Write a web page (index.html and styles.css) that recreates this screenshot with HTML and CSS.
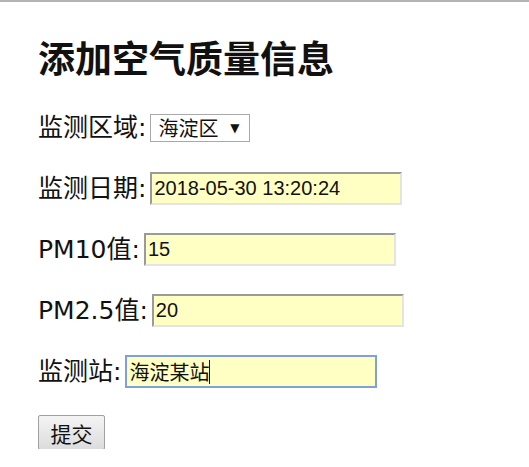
FILE: index.html
```html
<!DOCTYPE html>
<html lang="zh-CN">

<head>
    <meta charset="UTF-8">
    <title>添加空气质量信息</title>
    <link rel="stylesheet" href="styles.css">
</head>

<body>
    <div class="page">
        <h1>添加空气质量信息</h1>
        <form class="air-form">
            <div class="row">
                <label>监测区域:</label>
                <div class="select">海淀区<span class="arrow">▼</span></div>
            </div>
            <div class="row">
                <label>监测日期:</label>
                <input class="field" type="text" value="2018-05-30 13:20:24">
            </div>
            <div class="row">
                <label>PM10值:</label>
                <input class="field" type="text" value="15">
            </div>
            <div class="row">
                <label>PM2.5值:</label>
                <input class="field" type="text" value="20">
            </div>
            <div class="row">
                <label>监测站:</label>
                <div class="field focused">海淀某站<span class="caret"></span></div>
            </div>
            <div class="row">
                <button class="btn" type="button">提交</button>
            </div>
        </form>
    </div>
</body>

</html>
```

FILE: styles.css
```css
body {
    margin: 0;
    font-family: "Noto Sans CJK SC", "Liberation Sans", sans-serif;
    color: #111;
    background: white;
}

.page {
    border-top: 2px solid #b4b4b4;
    padding: 0 38px;
}

h1 {
    margin: 30px 0 29px;
    font-size: 37px;
    line-height: 50px;
    font-weight: bold;
}

.air-form {
    display: flex;
    flex-direction: column;
    gap: 28px;
}

.row {
    display: flex;
    align-items: center;
    gap: 4px;
    height: 33px;
}

label {
    font-family: "DejaVu Sans", "Noto Sans CJK SC", sans-serif;
    font-size: 25px;
    line-height: 33px;
}

.select {
    display: flex;
    align-items: center;
    box-sizing: border-box;
    width: 100px;
    height: 28px;
    padding: 0 10px 0 7px;
    border: 1px solid #a9a9a9;
    font-size: 20px;
}

.select .arrow {
    margin-left: auto;
    font-size: 12px;
    font-family: "DejaVu Sans", sans-serif;
}

.field {
    box-sizing: border-box;
    width: 252px;
    height: 33px;
    padding: 0 2px;
    border-style: solid;
    border-width: 2px;
    border-color: #9a9a9a #e4e4e4 #e4e4e4 #9a9a9a;
    background: #ffffc4;
    font-family: "Liberation Sans", "Noto Sans CJK SC", sans-serif;
    font-size: 20px;
    color: #111;
    outline: none;
}

.field.focused {
    display: flex;
    align-items: center;
    border: 2px solid #7fa0d8;
    font-family: "Noto Sans CJK SC", sans-serif;
    font-size: 20px;
}

.caret {
    display: inline-block;
    width: 1px;
    height: 24px;
    background: #111;
}

.btn {
    box-sizing: border-box;
    height: 35px;
    width: 67px;
    margin-top: 0;
    border: 1px solid #a0a0a0;
    border-radius: 2px;
    background: linear-gradient(#f4f4f4, #dcdcdc);
    font-family: "Noto Sans CJK SC", sans-serif;
    font-size: 21px;
    color: #111;
}
```
